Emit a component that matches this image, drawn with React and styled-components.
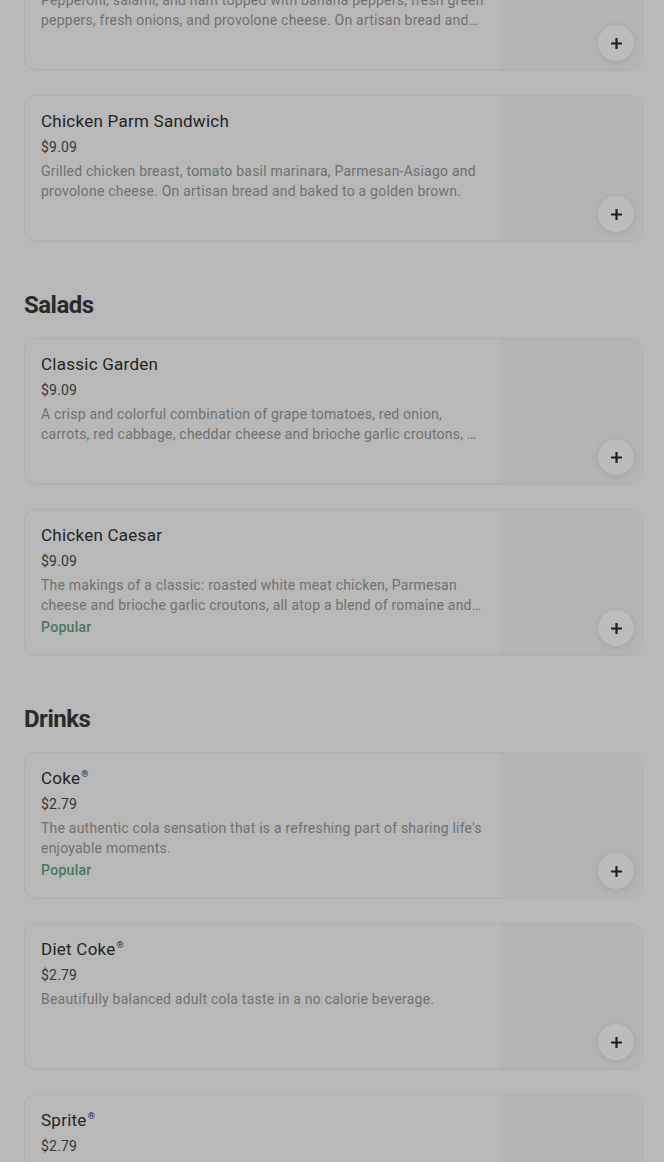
import React from "react";
import styled, { createGlobalStyle } from "styled-components";

const Global = createGlobalStyle`
  html, body { margin: 0; padding: 0; background: #b8b8b8; }
  body { font-family: Roboto, "Liberation Sans", sans-serif; overflow: hidden; }
`;

const Page = styled.div`
  padding: 0 21px 0 24px;
  margin-top: -76px;
  display: flex;
  flex-direction: column;
`;

const Section = styled.section`
  display: flex;
  flex-direction: column;
  gap: 25px;
  margin-top: ${(p) => (p.$first ? "0" : "48px")};
`;

const Heading = styled.h2`
  margin: 0 0 -8px;
  font-size: 24px;
  line-height: 32px;
  font-weight: 700;
  letter-spacing: -0.5px;
  color: #2a2a2a;
`;

const Card = styled.div`
  position: relative;
  display: flex;
  height: 146px;
  box-sizing: border-box;
  border: 1px solid #afafaf;
  border-radius: 12px;
  overflow: hidden;
  box-shadow: 0 1px 2px rgba(0, 0, 0, 0.04);
`;

const Info = styled.div`
  flex: 1;
  min-width: 0;
  padding: 14px 15px 0 16px;
  display: flex;
  flex-direction: column;
`;

const Title = styled.div`
  font-size: 17px;
  line-height: 22px;
  font-weight: 400;
  letter-spacing: 0.25px;
  color: #242424;
`;

const Reg = styled.sup`
  font-size: 9px;
  vertical-align: top;
  line-height: 14px;
  margin-left: 1px;
`;

const Price = styled.div`
  margin-top: 5px;
  font-size: 14px;
  line-height: 20px;
  letter-spacing: 0.2px;
  color: #363636;
`;

const Desc = styled.div`
  margin-top: 4px;
  font-size: 14px;
  line-height: 20px;
  letter-spacing: 0.22px;
  color: #707070;
  display: -webkit-box;
  -webkit-line-clamp: 2;
  -webkit-box-orient: vertical;
  overflow: hidden;
`;

const Badge = styled.div`
  margin-top: 2px;
  font-size: 14px;
  line-height: 20px;
  font-weight: 500;
  letter-spacing: 0.3px;
  color: #437a5c;
`;

const Thumb = styled.div`
  width: 143px;
  flex: none;
  background: #b4b4b4;
`;

const AddButton = styled.button`
  position: absolute;
  right: 8px;
  bottom: 8px;
  width: 36px;
  height: 36px;
  border-radius: 50%;
  border: none;
  padding: 0;
  background: #bcbcbc;
  box-shadow: 0 1px 6px rgba(0, 0, 0, 0.1);
  display: flex;
  align-items: center;
  justify-content: center;
  color: #1f1f1f;
`;

const Plus = () => (
  <svg width="13" height="13" viewBox="0 0 13 13">
    <path d="M6.5 1v11M1 6.5h11" stroke="currentColor" strokeWidth="2.2" />
  </svg>
);

const Item = ({ title, reg, price, desc, popular }) => (
  <Card>
    <Info>
      <Title>
        {title}
        {reg && <Reg>®</Reg>}
      </Title>
      <Price>{price}</Price>
      <Desc>{desc}</Desc>
      {popular && <Badge>Popular</Badge>}
    </Info>
    <Thumb />
    <AddButton aria-label="Add">
      <Plus />
    </AddButton>
  </Card>
);

const sections = [
  {
    items: [
      {
        title: "Italian Sandwich",
        price: "$9.09",
        desc: "Pepperoni, salami, and ham topped with banana peppers, fresh green peppers, fresh onions, and provolone cheese. On artisan bread and baked to a golden brown.",
      },
      {
        title: "Chicken Parm Sandwich",
        price: "$9.09",
        desc: "Grilled chicken breast, tomato basil marinara, Parmesan-Asiago and provolone cheese. On artisan bread and baked to a golden brown.",
      },
    ],
  },
  {
    name: "Salads",
    items: [
      {
        title: "Classic Garden",
        price: "$9.09",
        desc: "A crisp and colorful combination of grape tomatoes, red onion, carrots, red cabbage, cheddar cheese and brioche garlic croutons, all atop a blend of romaine and iceberg lettuce.",
      },
      {
        title: "Chicken Caesar",
        price: "$9.09",
        desc: "The makings of a classic: roasted white meat chicken, Parmesan cheese and brioche garlic croutons, all atop a blend of romaine and iceberg lettuce.",
        popular: true,
      },
    ],
  },
  {
    name: "Drinks",
    items: [
      {
        title: "Coke",
        reg: true,
        price: "$2.79",
        desc: "The authentic cola sensation that is a refreshing part of sharing life's enjoyable moments.",
        popular: true,
      },
      {
        title: "Diet Coke",
        reg: true,
        price: "$2.79",
        desc: "Beautifully balanced adult cola taste in a no calorie beverage.",
      },
      {
        title: "Sprite",
        reg: true,
        price: "$2.79",
        desc: "Sprite® is a caffeine-free lemon-lime soft drink with a crisp, clean taste.",
      },
    ],
  },
];

export default function App() {
  return (
    <>
      <Global />
      <Page>
        {sections.map((s, i) => (
          <Section key={i} $first={i === 0}>
            {s.name && <Heading>{s.name}</Heading>}
            {s.items.map((it) => (
              <Item key={it.title} {...it} />
            ))}
          </Section>
        ))}
      </Page>
    </>
  );
}
